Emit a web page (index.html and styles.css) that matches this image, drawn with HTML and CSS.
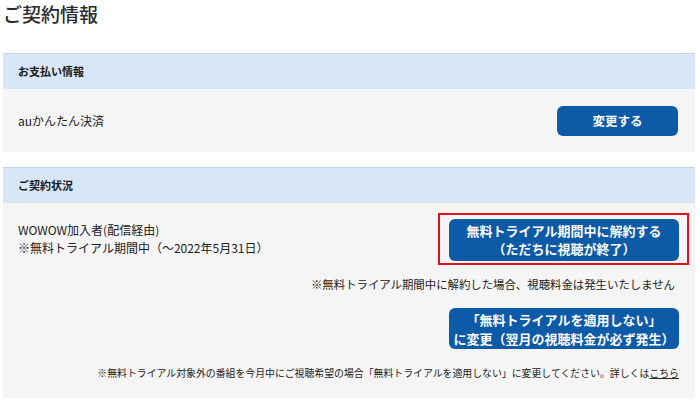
FILE: index.html
```html
<!DOCTYPE html>
<html lang="ja">
<head>
    <meta charset="UTF-8">
    <meta name="viewport" content="width=device-width, initial-scale=1.0">
    <title>ご契約情報</title>
    <link rel="stylesheet" href="styles.css">
</head>
<body>
    <div class="page">
        <h1 class="page-title">ご契約情報</h1>

        <div class="section">
            <div class="section-head">お支払い情報</div>
            <div class="section-body pay-row">
                <div class="pay-name">auかんたん決済</div>
                <button class="btn btn-change">変更する</button>
            </div>
        </div>

        <div class="section">
            <div class="section-head">ご契約状況</div>
            <div class="section-body status-body">
                <div class="status-row">
                    <div class="status-text">
                        WOWOW加入者(配信経由)<br>
                        ※無料トライアル期間中（～2022年5月31日）
                    </div>
                    <div class="highlight">
                        <button class="btn btn-wide btn-cancel">無料トライアル期間中に解約する<br>（ただちに視聴が終了）</button>
                    </div>
                </div>
                <div class="note note-cancel">※無料トライアル期間中に解約した場合、視聴料金は発生いたしません</div>
                <div class="apply-row">
                    <button class="btn btn-wide btn-apply">「無料トライアルを適用しない」<br>に変更（翌月の視聴料金が必ず発生）</button>
                </div>
                <div class="note note-small">※無料トライアル対象外の番組を今月中にご視聴希望の場合「無料トライアルを適用しない」に変更してください。詳しくは<a href="#">こちら</a></div>
            </div>
        </div>
    </div>
</body>
</html>
```

FILE: styles.css
```css
body {
    margin: 0;
    background: #fff;
    font-family: "Noto Sans CJK JP", "Noto Sans", sans-serif;
    color: #222;
}
.page {
    padding: 0 5px 0 3px;
}
.page-title {
    margin: 0 0 28px;
    padding-top: 2px;
    font-size: 19px;
    line-height: 23px;
    font-weight: 500;
    color: #2b2b2b;
}
.section {
    margin-bottom: 15px;
}
.section-head {
    background: #d8e7f6;
    border-top: 1px solid #c3d5e8;
    height: 35px;
    line-height: 35px;
    padding-left: 15px;
    font-size: 11px;
    font-weight: bold;
    color: #1a1a1a;
}
.section-body {
    background: #f5f5f5;
}
.pay-row {
    height: 63px;
    display: flex;
    align-items: center;
    justify-content: space-between;
    padding: 0 17px 0 15px;
}
.pay-name {
    font-size: 12px;
}
.btn {
    background: #0d5aa7;
    color: #fff;
    border: none;
    border-radius: 6px;
    font-family: inherit;
    font-weight: bold;
    cursor: pointer;
    padding: 0;
}
.btn-change {
    width: 121px;
    height: 30px;
    font-size: 12.5px;
}
.status-body {
    padding: 10px 16px 18px 15px;
}
.status-row {
    display: flex;
    align-items: center;
    justify-content: space-between;
    margin-right: -10px;
}
.status-text {
    font-size: 12px;
    line-height: 18px;
}
.highlight {
    border: 2px solid #e0141e;
    padding: 4px 8px 2px 9px;
}
.btn-wide {
    width: 230px;
    font-size: 13px;
}
.btn-cancel {
    height: 42px;
    line-height: 18px;
}
.note {
    text-align: right;
}
.note-cancel {
    margin-top: 11px;
    padding-right: 4px;
    font-size: 11.4px;
    line-height: 16px;
}
.apply-row {
    display: flex;
    justify-content: flex-end;
    margin-top: 16px;
}
.btn-apply {
    height: 41px;
    line-height: 19px;
}
.note-small {
    margin-top: 17px;
    font-size: 9.9px;
    line-height: 14px;
}
.note-small a {
    color: #222;
}
```
